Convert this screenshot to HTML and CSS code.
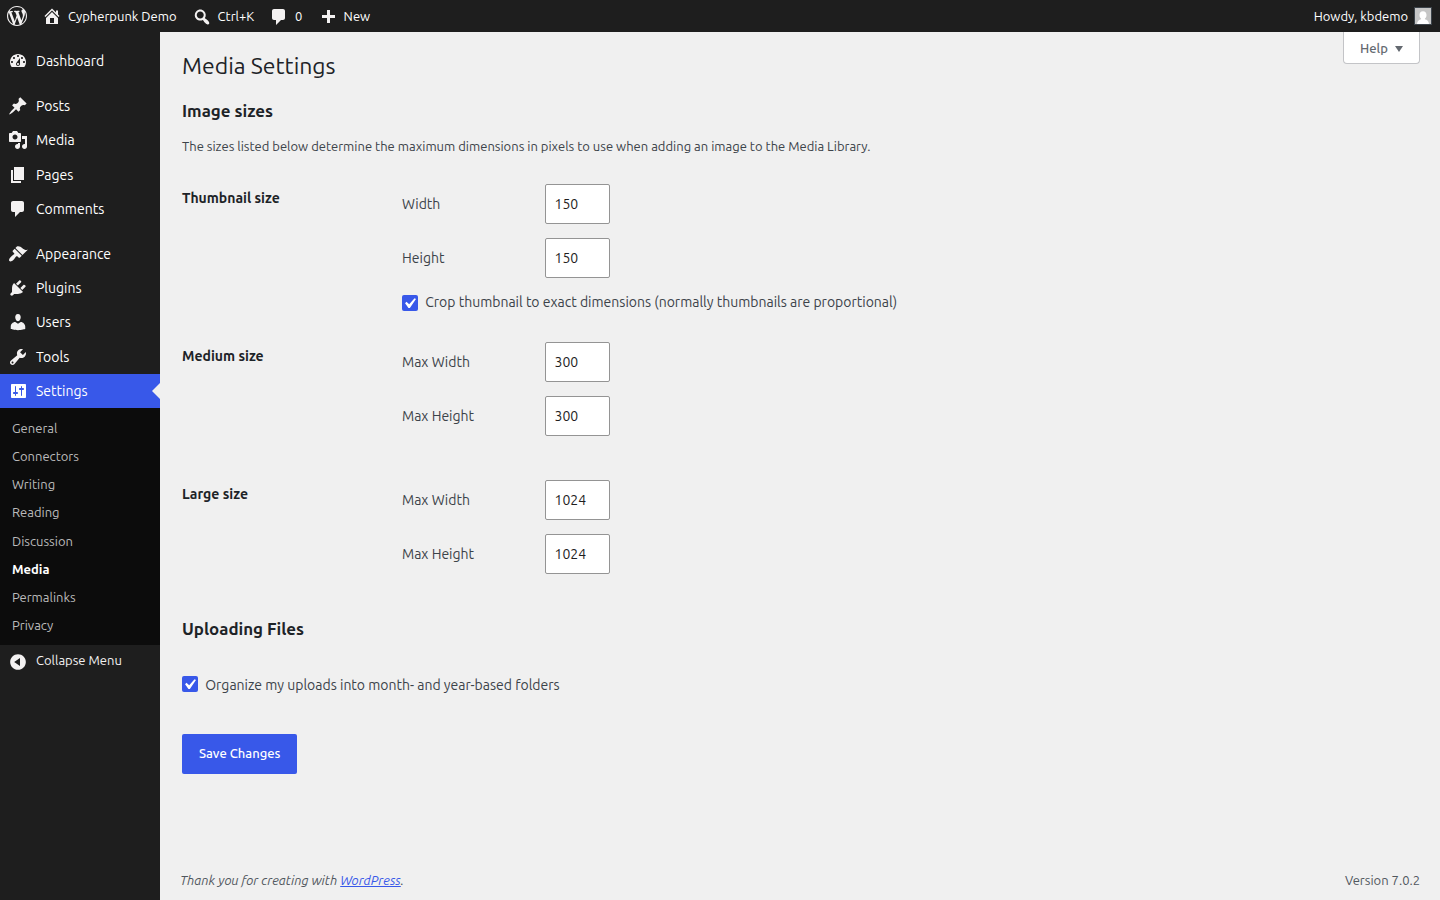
FILE: index.html
```html
<!DOCTYPE html>
<html lang="en">
<head>
<meta charset="utf-8">
<title>Media Settings</title>
<link rel="stylesheet" href="styles.css">
</head>
<body>
<header class="adminbar">
  <a class="bar-logo"><svg class="icon" viewBox="0 0 20 20"><path d="M20 10c0-5.51-4.49-10-10-10C4.48 0 0 4.49 0 10c0 5.52 4.48 10 10 10 5.51 0 10-4.48 10-10zM7.78 15.37L4.37 6.22c.55-.02 1.17-.08 1.17-.08.5-.06.44-1.13-.06-1.11 0 0-1.45.11-2.37.11-.18 0-.37 0-.58-.01C4.12 2.69 6.87 1.11 10 1.11c2.33 0 4.45.87 6.05 2.34-.68-.11-1.65.39-1.65 1.58 0 .74.45 1.36.9 2.1.35.61.55 1.36.55 2.46 0 1.49-1.4 5-1.4 5l-3.03-8.37c.54-.02.82-.17.82-.17.5-.05.44-1.25-.06-1.22 0 0-1.44.12-2.38.12-.87 0-2.33-.12-2.33-.12-.5-.03-.56 1.2-.06 1.22l.92.08 1.26 3.41zM17.41 10c.24-.64.74-1.87.43-4.25.7 1.29 1.05 2.71 1.05 4.25 0 3.29-1.73 6.24-4.4 7.78.97-2.59 1.94-5.2 2.92-7.78zM6.1 18.09C3.12 16.65 1.11 13.53 1.11 10c0-1.3.23-2.48.72-3.59C3.25 10.3 4.67 14.2 6.1 18.09zm4.03-6.63l2.58 6.98c-.86.29-1.76.45-2.71.45-.79 0-1.57-.11-2.29-.33.81-2.38 1.62-4.74 2.42-7.1z"/></svg></a>
  <a class="bar-site"><svg class="icon" viewBox="0 0 20 20"><path fill-rule="evenodd" d="M16 8.5l1.53 1.53-1.06 1.06L10 4.6l-6.47 6.49-1.06-1.06L10 2.5l4 4v-2h2v4zm-6-2.46l6 5.99V18H4v-5.97zM12 17v-5H8v5h4z"/></svg><span>Cypherpunk Demo</span></a>
  <a class="bar-search"><svg class="icon" viewBox="0 0 20 20"><path d="M12.14 4.18c1.87 1.87 2.11 4.75.72 6.89.12.1.22.21.36.31.2.16.47.36.81.59.34.24.56.39.66.47.42.31.73.57.94.78.32.32.6.65.84 1 .25.35.44.69.59 1.04.14.35.21.68.18 1-.02.32-.14.59-.36.81s-.49.34-.81.36c-.31.02-.65-.04-.99-.19-.35-.14-.7-.34-1.04-.59-.35-.24-.68-.52-1-.84-.21-.21-.47-.52-.77-.93-.1-.13-.25-.35-.47-.66-.22-.32-.4-.57-.56-.78-.16-.2-.29-.35-.44-.5-2.07 1.09-4.69.76-6.44-.98-2.14-2.15-2.14-5.64 0-7.78 2.15-2.15 5.63-2.15 7.78 0zm-1.41 6.36c1.36-1.37 1.36-3.58 0-4.95-1.37-1.37-3.59-1.37-4.95 0-1.37 1.37-1.37 3.58 0 4.95 1.36 1.37 3.58 1.37 4.95 0z"/></svg><span>Ctrl+K</span></a>
  <a class="bar-comments"><svg class="icon" viewBox="0 0 20 20"><path d="M5 2h9c1.1 0 2 .9 2 2v7c0 1.1-.9 2-2 2h-2l-5 5v-5H5c-1.1 0-2-.9-2-2V4c0-1.1.9-2 2-2z"/></svg><span>0</span></a>
  <a class="bar-new"><svg class="icon" viewBox="0 0 20 20"><path d="M17 9v3h-5v5H9v-5H4V9h5V4h3v5z"/></svg><span>New</span></a>
  <a class="bar-user"><span>Howdy, kbdemo</span><svg class="avatar" viewBox="0 0 18 18"><rect x=".5" y=".5" width="17" height="17" fill="#c6c6c6" stroke="#3c434a"/><path fill="#fff" d="M9 4.2c2.2 0 3.5 1.5 3.5 3.7 0 1.6-.7 2.9-1.6 3.6v.8c2.3.6 3.7 1.7 4.1 4.7H3c.4-3 1.8-4.1 4.1-4.7v-.8c-.9-.7-1.6-2-1.6-3.6C5.5 5.7 6.8 4.2 9 4.2z"/></svg></a>
</header>
<div class="layout">
  <nav class="sidebar">
    <a class="item"><svg class="icon" viewBox="0 0 20 20"><path d="M3.76 16h12.48c1.1-1.37 1.76-3.11 1.76-5 0-4.42-3.58-8-8-8s-8 3.58-8 8c0 1.89.66 3.63 1.76 5zM10 4c.55 0 1 .45 1 1s-.45 1-1 1-1-.45-1-1 .45-1 1-1zM6 6c.55 0 1 .45 1 1s-.45 1-1 1-1-.45-1-1 .45-1 1-1zm8 0c.55 0 1 .45 1 1s-.45 1-1 1-1-.45-1-1 .45-1 1-1zm-5.37 5.55L12 7v6c0 1.1-.9 2-2 2s-2-.9-2-2c0-.57.24-1.08.63-1.45zM4 10c.55 0 1 .45 1 1s-.45 1-1 1-1-.45-1-1 .45-1 1-1zm12 0c.55 0 1 .45 1 1s-.45 1-1 1-1-.45-1-1 .45-1 1-1zm-5 3c0-.55-.45-1-1-1s-1 .45-1 1 .45 1 1 1 1-.45 1-1z" fill-rule="evenodd"/></svg><span>Dashboard</span></a>
    <div class="separator"></div>
    <a class="item"><svg class="icon" viewBox="0 0 20 20"><path d="M10.44 3.02l1.82-1.82 6.36 6.35-1.83 1.82c-1.05-.68-2.48-.57-3.41.36l-.75.75c-.92.93-1.04 2.35-.35 3.41l-1.83 1.82-2.41-2.41-2.8 2.79c-.42.42-3.38 2.71-3.8 2.29s1.86-3.39 2.28-3.81l2.79-2.79L4.1 9.36l1.83-1.82c1.05.69 2.48.57 3.4-.36l.75-.75c.93-.92 1.05-2.35.36-3.41z"/></svg><span>Posts</span></a>
    <a class="item"><svg class="icon" viewBox="0 0 20 20"><path fill-rule="evenodd" d="M13 11V4c0-.55-.45-1-1-1h-1.67L9 1H5L3.67 3H2c-.55 0-1 .45-1 1v7c0 .55.45 1 1 1h10c.55 0 1-.45 1-1zM7 4.5c1.38 0 2.5 1.12 2.5 2.5S8.38 9.5 7 9.5 4.5 8.38 4.5 7 5.62 4.5 7 4.5zM14 6h5v10.5c0 1.38-1.12 2.5-2.5 2.5S14 17.88 14 16.5s1.12-2.5 2.5-2.5c.17 0 .34.02.5.05V9h-3V6zm-4 8.05V13h2v3.5c0 1.38-1.12 2.5-2.5 2.5S7 17.88 7 16.5 8.12 14 9.5 14c.17 0 .34.02.5.05z"/></svg><span>Media</span></a>
    <a class="item"><svg class="icon" viewBox="0 0 20 20"><path d="M6 15V2h10v13H6zm-1 1h8v2H3V5h2v11z"/></svg><span>Pages</span></a>
    <a class="item"><svg class="icon" viewBox="0 0 20 20"><path d="M5 2h9c1.1 0 2 .9 2 2v7c0 1.1-.9 2-2 2h-2l-5 5v-5H5c-1.1 0-2-.9-2-2V4c0-1.1.9-2 2-2z"/></svg><span>Comments</span></a>
    <div class="separator"></div>
    <a class="item"><svg class="icon" viewBox="0 0 20 20"><path d="M14.48 11.06L7.41 3.99l1.5-1.5c.5-.56 2.3-.47 3.51.32 1.21.8 1.43 1.28 2.91 2.1 1.18.64 2.45 1.26 4.45.85zm-.71.71L6.7 4.7 4.93 6.47c-.39.39-.39 1.02 0 1.41l1.06 1.06c.39.39.39 1.03 0 1.42-.6.6-1.43 1.11-2.21 1.69-.35.26-.7.53-1.01.84C1.43 14.23.4 16.08 1.4 17.07c.99 1 2.84-.03 4.18-1.36.31-.31.58-.66.85-1.02.57-.78 1.08-1.61 1.69-2.21.39-.39 1.02-.39 1.41 0l1.06 1.06c.39.39 1.02.39 1.41 0z"/></svg><span>Appearance</span></a>
    <a class="item"><svg class="icon" viewBox="0 0 20 20"><path d="M13.11 4.36L9.87 7.6 8 5.73l3.24-3.24c.35-.34 1.05-.2 1.56.32.52.51.66 1.21.31 1.55zm-8 1.77l.91-1.12 9.01 9.01-1.19.84c-.71.71-2.63 1.16-3.82 1.16H6.14L4.9 17.26c-.59.59-1.54.59-2.12 0-.59-.58-.59-1.53 0-2.12l1.24-1.24v-3.88c0-1.13.4-3.19 1.09-3.89zm7.26 3.97l3.24-3.24c.34-.35 1.04-.21 1.55.31.52.51.66 1.21.31 1.55l-3.24 3.25z"/></svg><span>Plugins</span></a>
    <a class="item"><svg class="icon" viewBox="0 0 20 20"><path d="M10 9.25c-2.27 0-2.73-3.44-2.73-3.44C7 4.02 7.82 2 9.97 2c2.16 0 2.98 2.02 2.71 3.81 0 0-.41 3.44-2.68 3.44zm0 2.57L12.72 10c2.39 0 4.52 2.33 4.52 4.53v2.49s-3.65 1.13-7.24 1.13c-3.65 0-7.24-1.13-7.24-1.13v-2.49c0-2.25 1.94-4.48 4.47-4.48z"/></svg><span>Users</span></a>
    <a class="item"><svg class="icon" viewBox="0 0 20 20"><path fill-rule="evenodd" d="M16.68 9.77c-1.34 1.34-3.3 1.67-4.95.99l-5.41 6.52c-.99.99-2.59.99-3.58 0s-.99-2.59 0-3.57l6.52-5.42c-.68-1.65-.35-3.61.99-4.95 1.28-1.28 3.12-1.62 4.72-1.06l-2.89 2.89 2.82 2.82 2.86-2.87c.53 1.58.18 3.39-1.08 4.65zM3.81 16.21c.4.39 1.04.39 1.43 0 .4-.4.4-1.04 0-1.43-.39-.4-1.03-.4-1.43 0-.39.39-.39 1.03 0 1.43z"/></svg><span>Tools</span></a>
    <a class="item current"><svg class="icon" viewBox="0 0 20 20"><path fill-rule="evenodd" d="M18 16V4c0-.55-.45-1-1-1H4c-.55 0-1 .45-1 1v12c0 .55.45 1 1 1h13c.55 0 1-.45 1-1zM8 11h1c.55 0 1 .45 1 1s-.45 1-1 1H8v1.5c0 .28-.22.5-.5.5s-.5-.22-.5-.5V13H6c-.55 0-1-.45-1-1s.45-1 1-1h1V5.5c0-.28.22-.5.5-.5s.5.22.5.5V11zm5-2h-1c-.55 0-1-.45-1-1s.45-1 1-1h1V5.5c0-.28.22-.5.5-.5s.5.22.5.5V7h1c.55 0 1 .45 1 1s-.45 1-1 1h-1v5.5c0 .28-.22.5-.5.5s-.5-.22-.5-.5V9z"/></svg><span>Settings</span></a>
    <div class="submenu"><a>General</a><a>Connectors</a><a>Writing</a><a>Reading</a><a>Discussion</a><a class="active">Media</a><a>Permalinks</a><a>Privacy</a></div>
    <a class="collapse"><svg class="icon" viewBox="0 0 20 20"><path fill-rule="evenodd" d="M10 2.16c4.33 0 7.84 3.51 7.84 7.84s-3.51 7.84-7.84 7.84S2.16 14.33 2.16 10 5.71 2.16 10 2.16zm2 11.72V6.12L6.18 9.97z"/></svg><span>Collapse Menu</span></a>
  </nav>
  <main class="content">
    <div class="help"><span>Help</span><i class="caret"></i></div>
    <h1>Media Settings</h1>
    <h2>Image sizes</h2>
    <p class="desc">The sizes listed below determine the maximum dimensions in pixels to use when adding an image to the Media Library.</p>
    <section class="row">
      <h3>Thumbnail size</h3>
      <div class="fields">
        <label class="field"><span>Width</span><input value="150"></label>
        <label class="field"><span>Height</span><input value="150"></label>
        <label class="check crop"><i class="box"><svg viewBox="0 0 20 20"><path d="M14.83 4.89l1.34.94-5.81 8.38H9.02L5.78 9.67l1.34-1.25 2.57 2.4z"/></svg></i><span>Crop thumbnail to exact dimensions (normally thumbnails are proportional)</span></label>
      </div>
    </section>
    <section class="row medium">
      <h3>Medium size</h3>
      <div class="fields">
        <label class="field"><span>Max Width</span><input value="300"></label>
        <label class="field"><span>Max Height</span><input value="300"></label>
      </div>
    </section>
    <section class="row large">
      <h3>Large size</h3>
      <div class="fields">
        <label class="field"><span>Max Width</span><input value="1024"></label>
        <label class="field"><span>Max Height</span><input value="1024"></label>
      </div>
    </section>
    <h2 class="upload">Uploading Files</h2>
    <label class="check organize"><i class="box"><svg viewBox="0 0 20 20"><path d="M14.83 4.89l1.34.94-5.81 8.38H9.02L5.78 9.67l1.34-1.25 2.57 2.4z"/></svg></i><span>Organize my uploads into month- and year-based folders</span></label>
    <button class="save">Save Changes</button>
    <footer class="footer"><em>Thank you for creating with <a>WordPress</a>.</em><span>Version 7.0.2</span></footer>
  </main>
</div>
</body>
</html>
```
FILE: styles.css
```css
* { box-sizing: border-box; }
body { margin: 0; background: #f0f0f0; color: #3c434a; font: 13px/1.4 Ubuntu, "Noto Sans", sans-serif; }
.icon { width: 20px; height: 20px; fill: #f3f1f1; flex: none; display: block; }
.adminbar { display: flex; height: 32px; background: #1e1e1e; color: #fff; padding: 0 8px 0 7px; }
.adminbar a { display: flex; align-items: center; gap: 6px; }
.bar-logo { width: 35px; }
.bar-site { width: 149.6px; }
.bar-search { width: 77px; }
.bar-search .icon, .bar-comments .icon { margin-top: 2px; }
.bar-comments { width: 49px; }
.bar-comments span { padding-left: .4px; }
.bar-user { margin-left: auto; }
.avatar { width: 18px; height: 18px; }
.layout { display: flex; height: 868px; }
.sidebar { width: 160px; background: #1e1e1e; padding-top: 12px; color: #fff; }
.item { display: flex; height: 34.2px; align-items: flex-start; padding-left: 8px; gap: 8px; font-size: 14px; line-height: 19.6px; }
.item .icon { margin-top: 7px; }
.item span { margin-top: 8.1px; }
.separator { height: 11px; }
.current { position: relative; background: #3858e9; }
.current .icon { fill: #fff; }
.current::after { content: ""; position: absolute; right: 0; top: 9px; border: 8px solid transparent; border-right-color: #f0f0f0; border-left: 0; }
.submenu { background: #0c0c0c; padding: 6px 0 5.4px; }
.submenu a { display: flex; align-items: center; height: 28.2px; padding-left: 12px; color: #bbb; }
.submenu .active { color: #fff; font-weight: 600; }
.collapse { display: flex; align-items: flex-start; height: 34px; padding-left: 8px; gap: 8px; color: #f3f1f1; }
.collapse .icon { margin-top: 7px; }
.collapse span { margin-top: 6.5px; }
.content { flex: 1; position: relative; padding: 16px 20px 0 22px; display: flex; flex-direction: column; }
.help { position: absolute; right: 20px; top: 0; width: 77px; height: 32px; background: #fff; border: 1px solid #c3c4c7; border-top: 0; border-radius: 0 0 4px 4px; padding: 2px 0 0 16px; display: flex; align-items: center; gap: 7px; color: #646970; font-weight: 500; }
.caret { border: 4px solid transparent; border-top: 6px solid #646970; border-bottom: 0; }
h1 { margin: 0; font-size: 23px; font-weight: 400; line-height: 36px; color: #1d2327; }
h2 { margin: 16px 0 0; font-size: 16.9px; font-weight: 600; line-height: 22px; color: #1d2327; }
.desc { margin: 14px 0 0; line-height: 20px; }
.row { display: flex; margin-top: 28px; font-size: 14px; }
h3 { width: 220px; margin: 4px 0 0; font-size: 14px; line-height: 20px; font-weight: 600; color: #1d2327; }
.fields { display: flex; flex-direction: column; gap: 14px; }
.field { display: flex; align-items: center; height: 40px; }
.field span { width: 143px; line-height: 20px; }
input { width: 65px; height: 40px; border: 1px solid #949494; border-radius: 2px; padding: 0 8.5px; font: 14px Ubuntu, "Noto Sans", sans-serif; color: #1e1e1e; background: #fff; }
.check { display: flex; align-items: center; gap: 7.2px; height: 20px; font-size: 14px; }
.box { width: 16px; height: 16px; border-radius: 2px; background: #3858e9; display: block; flex: none; }
.box svg { display: block; width: 21px; height: 21px; margin: -2px 0 0 -3px; fill: #fff; }
.crop { margin-top: 1px; }
.medium { margin-top: 29px; }
.large { margin-top: 44px; }
.upload { margin-top: 44px; }
.organize { margin-top: 34px; }
.organize span { padding-top: 3px; }
.save { align-self: flex-start; margin-top: 40px; width: 115px; height: 40px; padding: 0 0 2px .4px; border: 0; border-radius: 2px; background: #3858e9; color: #fff; font: 500 13px Ubuntu, "Noto Sans", sans-serif; }
.footer { margin: auto 0 10px -2px; display: flex; justify-content: space-between; color: #50575e; line-height: 19px; }
.footer a { color: #3858e9; text-decoration: underline; }
```
